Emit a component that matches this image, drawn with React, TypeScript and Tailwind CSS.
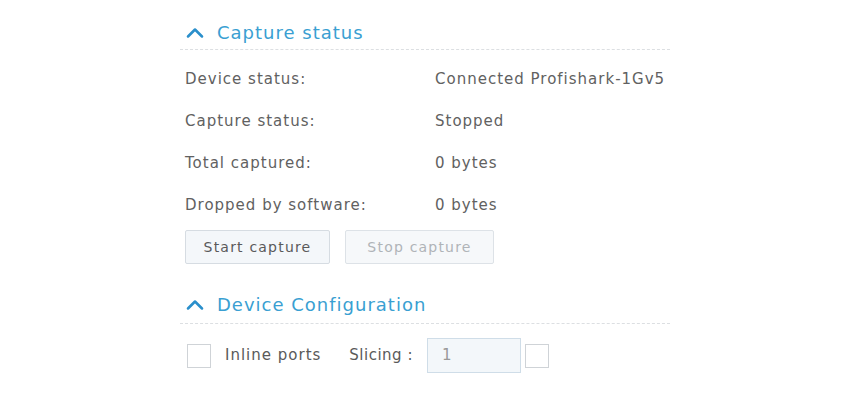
import { ChevronUp } from "lucide-react";

const rows = [
  { label: "Device status:", value: "Connected Profishark-1Gv5" },
  { label: "Capture status:", value: "Stopped" },
  { label: "Total captured:", value: "0 bytes" },
  { label: "Dropped by software:", value: "0 bytes" },
];

function SectionHeader({ title, pad }: { title: string; pad: string }) {
  return (
    <div className={`flex items-center gap-[8px] pl-[1px] border-b border-dashed border-[#dcdfe2] ${pad}`}>
      <ChevronUp size={28} strokeWidth={2.2} className="text-[#2a8fcb]" />
      <span className="text-[18px] tracking-[1px] text-[#3a9fd2] leading-[26px]">{title}</span>
    </div>
  );
}

export default function App() {
  return (
    <div className="w-[851px] h-[401px] bg-white font-['DejaVu_Sans',sans-serif] overflow-hidden">
      <div className="ml-[180px] w-[490px] pt-[20px]">
        <SectionHeader title="Capture status" pad="pb-[3px] h-[30px]" />

        <div className="pt-[8px]">
          {rows.map((row) => (
            <div
              key={row.label}
              className="flex items-center h-[42px] pl-[5px] text-[15px] tracking-[1px] text-[#616161]"
            >
              <span className="w-[250px]">{row.label}</span>
              <span>{row.value}</span>
            </div>
          ))}
        </div>

        <div className="flex gap-[15px] pl-[5px] mt-[4px]">
          <button className="w-[145px] h-[34px] rounded-[2px] border border-[#d6dce2] bg-[#f4f7fa] text-[14px] tracking-[1.2px] text-[#5a5a5a]">
            Start capture
          </button>
          <button className="w-[149px] h-[34px] rounded-[2px] border border-[#dde2e7] bg-[#f6f8fa] text-[14px] tracking-[1.2px] text-[#b0b4b8]">
            Stop capture
          </button>
        </div>

        <div className="mt-[28px]">
          <SectionHeader title="Device Configuration" pad="pb-[5px] h-[32px]" />
        </div>

        <div className="flex items-center pl-[7px] mt-[14px]">
          <div className="w-[24px] h-[24px] border border-[#cfd3d7] bg-white" />
          <span className="ml-[14px] text-[15px] tracking-[1px] text-[#5a5a5a]">Inline ports</span>
          <span className="ml-[28px] text-[15px] tracking-[0.5px] text-[#5a5a5a]">Slicing :</span>
          <div className="ml-[14px] w-[94px] h-[35px] border border-[#cfdde8] bg-[#f3f7fa] flex items-center pl-[14px] text-[15px] text-[#999]">
            1
          </div>
          <div className="ml-[4px] w-[24px] h-[24px] border border-[#cfd3d7] bg-white" />
        </div>
      </div>
    </div>
  );
}
